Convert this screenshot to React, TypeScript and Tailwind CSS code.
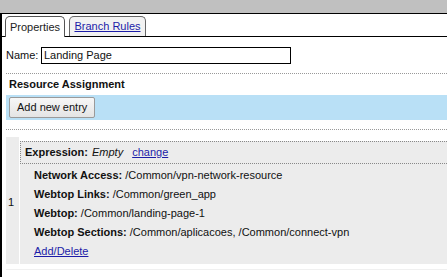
import React from "react";

const rows = [
  { label: "Network Access:", value: "/Common/vpn-network-resource" },
  { label: "Webtop Links:", value: "/Common/green_app" },
  { label: "Webtop:", value: "/Common/landing-page-1" },
  { label: "Webtop Sections:", value: "/Common/aplicacoes, /Common/connect-vpn" },
];

export default function App() {
  return (
    <div
      className="flex h-[277px] w-[447px] flex-col overflow-hidden bg-white text-[11px] text-[#111]"
      style={{ fontFamily: '"Liberation Sans", Arial, sans-serif' }}
    >
      {/* top strip */}
      <div className="h-[14px] shrink-0 border-b border-black bg-[#c0c0c0]" />

      <div className="flex flex-1 flex-col border-l-2 border-black">
        {/* tabs */}
        <div className="flex h-[23px] shrink-0 items-end gap-[4px] border-b border-black pl-[3px]">
          <div className="-mb-px flex h-[21px] w-[60px] items-center justify-center rounded-t-[5px] border border-b-0 border-[#555] bg-white text-[#222]">
            Properties
          </div>
          <div className="flex h-[20px] w-[77px] items-center justify-center rounded-t-[5px] border border-b-0 border-[#666] bg-[#f2f2f2]">
            <a className="text-[#1c1ca8] underline">Branch Rules</a>
          </div>
        </div>

        <div className="flex flex-1 flex-col pl-[4px]">
          {/* name */}
          <div className="mt-[10px] flex h-[17px] items-center">
            <span className="w-[35px]">Name:</span>
            <div className="flex h-[17px] w-[250px] items-center border border-black px-[2px]">
              Landing Page
            </div>
          </div>

          <div className="mt-[9px] border-t border-dotted border-[#999]" />

          <div className="h-[21px] pl-[3px] font-bold leading-[21px]">Resource Assignment</div>

          {/* blue toolbar */}
          <div className="flex h-[25px] items-start bg-[#b9e0f6] pl-[3px] pt-[2px]">
            <button className="h-[21px] rounded-[2px] border border-[#9a9a9a] bg-gradient-to-b from-[#f7f7f7] to-[#e4e4e4] px-[7px] text-[11px] text-[#111]">
              Add new entry
            </button>
          </div>

          <div className="mt-[9px] border-t border-dotted border-[#999]" />

          {/* entry table */}
          <div className="mt-[7px] flex h-[127px]">
            <div className="flex w-[14px] shrink-0 items-center border-r border-white bg-[#ececec] pl-[2px] pt-[4px]">
              1
            </div>
            <div className="mt-[4px] flex flex-1 flex-col bg-[#ececec]">
              <div className="flex h-[23px] items-center border-b border-l border-t border-dotted border-[#888] pl-[4px]">
                <span className="font-bold">Expression:</span>
                <em className="ml-[4px]">Empty</em>
                <a className="ml-[9px] text-[#1c1ca8] underline">change</a>
              </div>
              <div className="flex flex-col pl-[14px] pt-[2px]">
                {rows.map((r) => (
                  <div key={r.label} className="h-[19px] leading-[19px]">
                    <span className="font-bold">{r.label}</span> {r.value}
                  </div>
                ))}
                <div className="h-[19px] leading-[19px]">
                  <a className="text-[#1c1ca8] underline">Add/Delete</a>
                </div>
              </div>
            </div>
          </div>
          <div className="mt-[5px] border-t border-[#f0f0f0]" />
        </div>
      </div>
    </div>
  );
}
